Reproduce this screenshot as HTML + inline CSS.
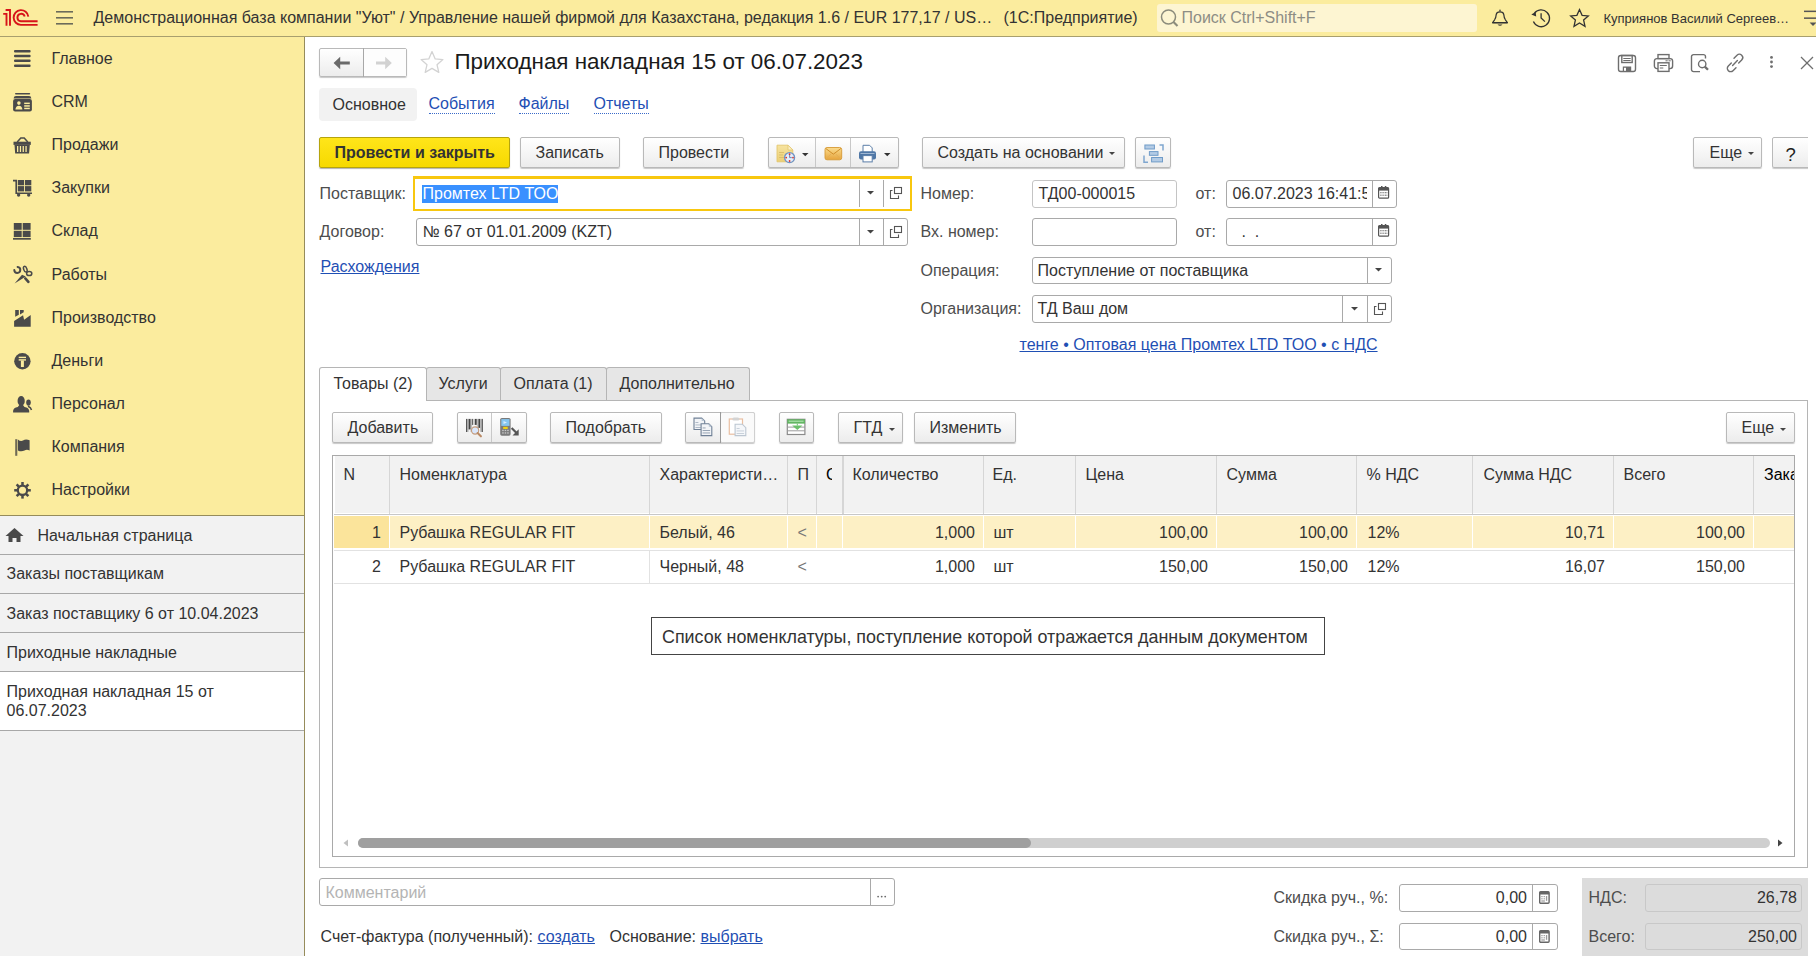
<!DOCTYPE html>
<html><head><meta charset="utf-8"><style>
html,body{margin:0;padding:0;width:1816px;height:956px;overflow:hidden;background:#fff}
body{position:relative;font-family:"Liberation Sans", sans-serif;font-size:16px}
.t{position:absolute;white-space:pre;line-height:20px;font-family:"Liberation Sans", sans-serif}
svg{overflow:visible}
</style></head><body>
<div style="position:absolute;left:0px;top:0px;width:1816px;height:36px;box-sizing:border-box;background:#fbec9e"></div>
<div style="position:absolute;left:0px;top:36px;width:1816px;height:1px;box-sizing:border-box;background:#a89f6e"></div>
<svg style="position:absolute;left:0px;top:0px" width="44" height="32" viewBox="0 0 44 32"><g fill="none" stroke="#d7141a" stroke-width="1.9" stroke-linecap="butt">
<path d="M3.2 13.9 H6.5 V25.7"/>
<path d="M5.6 10 H10 V25.7"/>
<path d="M28.3 16.6 A7.35 7.35 0 1 0 20.9 24.85 H37.6"/>
<path d="M24.7 16.6 A3.7 3.7 0 1 0 20.9 21.2 H37.6"/>
</g></svg>
<svg style="position:absolute;left:56px;top:11px" width="18" height="14" viewBox="0 0 18 14"><g fill="#6b6b5a"><rect x="0" y="0" width="17" height="1.6"/><rect x="0" y="6" width="17" height="1.6"/><rect x="0" y="12" width="17" height="1.6"/></g></svg>
<div class="t" style="left:93.5px;top:8px;font-size:16px;color:#333;font-weight:400;">Демонстрационная база компании "Уют" / Управление нашей фирмой для Казахстана, редакция 1.6 / EUR 177,17 / US…</div>
<div class="t" style="left:1003.5px;top:8px;font-size:16px;color:#333;font-weight:400;">(1С:Предприятие)</div>
<div style="position:absolute;left:1157px;top:4px;width:320px;height:28px;box-sizing:border-box;background:#fdf5d2;border-radius:3px"></div>
<svg style="position:absolute;left:1160px;top:8px" width="20" height="20" viewBox="0 0 20 20"><g fill="none" stroke="#8c8c7c" stroke-width="1.5"><circle cx="8.5" cy="9" r="7"/><path d="M13.5 14 L17.5 18" stroke-width="2.2"/></g></svg>
<div class="t" style="left:1181.5px;top:8px;font-size:16px;color:#8d8d85;font-weight:400;">Поиск Ctrl+Shift+F</div>
<svg style="position:absolute;left:1491px;top:8px" width="20" height="20" viewBox="0 0 20 20"><g fill="none" stroke="#333" stroke-width="1.2" stroke-linejoin="round"><path d="M1.6 14.6 L3.6 11.8 Q5 9.6 5.2 6.6 Q5.6 3.9 9 3.9 Q12.4 3.9 12.8 6.6 Q13 9.6 14.4 11.8 L16.4 14.6 Z"/></g><path d="M9 1 L10 3.2 H8Z" fill="#333"/><rect x="1.3" y="14.2" width="15.4" height="1.2" fill="#333"/><path d="M6.5 16.4 H11.5 Q9 19.2 6.5 16.4Z" fill="#333"/></svg>
<svg style="position:absolute;left:1530px;top:8px" width="22" height="20" viewBox="0 0 22 20"><g fill="none" stroke="#333" stroke-width="1.3"><path d="M3.4 13.6 A8.4 8.4 0 1 0 4.2 5.6"/><path d="M11.1 5.2 V10 L14.9 13.6"/></g><path d="M1.3 6.6 L5.6 4 L6.2 8.5Z" fill="#333"/></svg>
<svg style="position:absolute;left:1569px;top:8px" width="21" height="20" viewBox="0 0 21 20"><path d="M10.5 1.6 L13.1 7.3 L19.3 7.9 L14.6 12 L16 18.3 L10.5 15 L5 18.3 L6.4 12 L1.7 7.9 L7.9 7.3Z" fill="none" stroke="#333" stroke-width="1.3" stroke-linejoin="miter"/></svg>
<div class="t" style="left:1603.5px;top:9px;font-size:13.33px;color:#333;font-weight:400;font-size:13px">Куприянов Василий Сергеев…</div>
<svg style="position:absolute;left:1801px;top:8px" width="15" height="20" viewBox="0 0 15 20"><g fill="#555"><rect x="3" y="2.6" width="14" height="1.5"/><rect x="3" y="9.4" width="14" height="1.5"/><path d="M8.6 14.6 H15.4 L12 18Z"/></g></svg>
<div style="position:absolute;left:0px;top:37px;width:304px;height:478px;box-sizing:border-box;background:#fbec9e"></div>
<div style="position:absolute;left:0px;top:515px;width:304px;height:441px;box-sizing:border-box;background:#f2f2f2"></div>
<div style="position:absolute;left:304px;top:37px;width:1px;height:919px;box-sizing:border-box;background:#968c5b"></div>
<div style="position:absolute;left:0px;top:515px;width:304px;height:1px;box-sizing:border-box;background:#968c5b"></div>
<div class="t" style="left:51.5px;top:49px;font-size:16px;color:#333;font-weight:400;">Главное</div>
<div class="t" style="left:51.5px;top:92px;font-size:16px;color:#333;font-weight:400;">CRM</div>
<div class="t" style="left:51.5px;top:135px;font-size:16px;color:#333;font-weight:400;">Продажи</div>
<div class="t" style="left:51.5px;top:178px;font-size:16px;color:#333;font-weight:400;">Закупки</div>
<div class="t" style="left:51.5px;top:221px;font-size:16px;color:#333;font-weight:400;">Склад</div>
<div class="t" style="left:51.5px;top:265px;font-size:16px;color:#333;font-weight:400;">Работы</div>
<div class="t" style="left:51.5px;top:308px;font-size:16px;color:#333;font-weight:400;">Производство</div>
<div class="t" style="left:51.5px;top:351px;font-size:16px;color:#333;font-weight:400;">Деньги</div>
<div class="t" style="left:51.5px;top:394px;font-size:16px;color:#333;font-weight:400;">Персонал</div>
<div class="t" style="left:51.5px;top:437px;font-size:16px;color:#333;font-weight:400;">Компания</div>
<div class="t" style="left:51.5px;top:480px;font-size:16px;color:#333;font-weight:400;">Настройки</div>
<svg style="position:absolute;left:12px;top:48px" width="22" height="20" viewBox="0 0 22 20"><g fill="#4a4a4a"><rect x="2" y="2" width="16.6" height="2.4" rx="1"/><rect x="2" y="6.8" width="16.6" height="2.4" rx="1"/><rect x="2" y="11.5" width="16.6" height="2.4" rx="1"/><rect x="2" y="16.5" width="16.6" height="2.4" rx="1"/></g></svg>
<svg style="position:absolute;left:12px;top:91px" width="22" height="20" viewBox="0 0 22 20"><g transform="translate(1,0)"><g fill="#4a4a4a"><rect x="2" y="2" width="15.2" height="1.6" rx="0.8"/><path d="M0.6 7.4 Q0.8 5 3 5 H16 Q18.2 5 18.4 7.4Z"/><rect x="0.1" y="8" width="18.8" height="12.6" rx="2"/></g><g fill="#fbec9e"><circle cx="5.9" cy="12.1" r="1.8"/><path d="M2.4 18.6 Q2.7 14.8 5.9 14.8 Q9.1 14.8 9.4 18.6Z"/><rect x="11.2" y="11.6" width="5.6" height="1.5"/><rect x="11.2" y="14.2" width="5.6" height="1.5"/><rect x="11.2" y="16.7" width="5.6" height="1.5"/></g></g></svg>
<svg style="position:absolute;left:12px;top:134px" width="22" height="20" viewBox="0 0 22 20"><path d="M5.2 8 L8.8 4 H12.2 L15.8 8" fill="none" stroke="#4a4a4a" stroke-width="1.5"/><g fill="#4a4a4a"><rect x="1.5" y="7.7" width="17.3" height="3.2"/><path d="M2.5 10.9 H17.8 L17.1 19.4 H3.2Z"/></g><g fill="#fbec9e"><rect x="5" y="12" width="1.3" height="6"/><rect x="7.8" y="12" width="1.3" height="6"/><rect x="10.6" y="12" width="1.3" height="6"/><rect x="13.4" y="12" width="1.3" height="6"/></g></svg>
<svg style="position:absolute;left:12px;top:177px" width="22" height="20" viewBox="0 0 22 20"><path d="M1 3.6 H4.2 V16.3 H20" fill="none" stroke="#4a4a4a" stroke-width="1.6"/><g fill="#4a4a4a"><rect x="5.8" y="3" width="6.3" height="5.3"/><rect x="13" y="3" width="6.3" height="5.3"/><rect x="5.8" y="9.1" width="6.3" height="5.3"/><rect x="13" y="9.1" width="6.3" height="5.3"/><circle cx="6.6" cy="18.1" r="1.7"/><circle cx="16.7" cy="18.1" r="1.7"/></g></svg>
<svg style="position:absolute;left:12px;top:220px" width="22" height="20" viewBox="0 0 22 20"><g fill="#4a4a4a"><rect x="1.8" y="3" width="7.9" height="6.8"/><rect x="10.7" y="3" width="7.9" height="6.8"/><rect x="1.8" y="10.8" width="7.9" height="6.3"/><rect x="10.7" y="10.8" width="7.9" height="6.3"/><rect x="1" y="18" width="17.8" height="1.7"/></g></svg>
<svg style="position:absolute;left:12px;top:264px" width="22" height="20" viewBox="0 0 22 20"><g fill="none" stroke="#4a4a4a" stroke-linecap="round"><path d="M5.6 2.9 A3 3 0 1 1 2.3 6.1" stroke-width="2"/><path d="M13.3 14.4 L16.4 17.8" stroke-width="2.6"/><ellipse cx="13.3" cy="5.2" rx="1.6" ry="3" transform="rotate(-20 13.3 5.2)" stroke-width="1.5"/><ellipse cx="17.2" cy="9.5" rx="2.6" ry="2.1" stroke-width="1.5"/></g><path d="M10 10.8 L13.8 12.6 L2.6 19.6Z" fill="#4a4a4a"/></svg>
<svg style="position:absolute;left:12px;top:307px" width="22" height="20" viewBox="0 0 22 20"><g fill="#4a4a4a"><path d="M2.1 19.8 V14 L11.05 8.3 L12.1 12.7 L18.7 8.1 V19.8Z"/><path d="M3.2 3 H6.8 V7.8 L3.2 9.8Z"/><path d="M8 3 H11.7 V5.3 L8 7.5Z"/></g></svg>
<svg style="position:absolute;left:12px;top:350px" width="22" height="20" viewBox="0 0 22 20"><circle cx="10.4" cy="11.3" r="8.2" fill="#4a4a4a"/><g fill="#fbec9e"><rect x="6.7" y="6.7" width="7.3" height="1.4"/><rect x="6.7" y="9.2" width="7.3" height="1.4"/><rect x="8.9" y="10.5" width="3" height="6.5"/></g></svg>
<svg style="position:absolute;left:12px;top:393px" width="22" height="20" viewBox="0 0 22 20"><g fill="#4a4a4a"><ellipse cx="9.15" cy="7.9" rx="3.6" ry="4.9"/><path d="M1.1 19.6 V17.8 Q1.4 14.8 5.8 14 L7.3 12 H11 L12.5 14 Q16.9 14.8 17.2 17.8 V19.6Z"/><ellipse cx="16.5" cy="9.6" rx="2.3" ry="3.1"/></g><path d="M16 13.3 Q19 14.5 19.5 17" fill="none" stroke="#4a4a4a" stroke-width="1.5"/></svg>
<svg style="position:absolute;left:12px;top:436px" width="22" height="20" viewBox="0 0 22 20"><rect x="3.2" y="3.2" width="2.1" height="16.6" fill="#6f6a55"/><path d="M5.9 3.5 Q8.5 5.8 11 4.6 Q13.5 2.6 17.6 4.2 V14.4 Q14.5 13.2 12.5 14.6 Q9 16.1 5.9 14.4Z" fill="#4a4a4a"/></svg>
<svg style="position:absolute;left:12px;top:479px" width="22" height="20" viewBox="0 0 22 20"><g fill="#4a4a4a"><rect x="9.25" y="3" width="2.5" height="4" transform="rotate(0 10.5 11.3)"/><rect x="9.25" y="3" width="2.5" height="4" transform="rotate(45 10.5 11.3)"/><rect x="9.25" y="3" width="2.5" height="4" transform="rotate(90 10.5 11.3)"/><rect x="9.25" y="3" width="2.5" height="4" transform="rotate(135 10.5 11.3)"/><rect x="9.25" y="3" width="2.5" height="4" transform="rotate(180 10.5 11.3)"/><rect x="9.25" y="3" width="2.5" height="4" transform="rotate(225 10.5 11.3)"/><rect x="9.25" y="3" width="2.5" height="4" transform="rotate(270 10.5 11.3)"/><rect x="9.25" y="3" width="2.5" height="4" transform="rotate(315 10.5 11.3)"/></g><circle cx="10.5" cy="11.3" r="4.7" fill="none" stroke="#4a4a4a" stroke-width="2.3"/></svg>
<div style="position:absolute;left:0px;top:554px;width:304px;height:1px;box-sizing:border-box;background:#a8a8a8"></div>
<div style="position:absolute;left:0px;top:593px;width:304px;height:1px;box-sizing:border-box;background:#a8a8a8"></div>
<div style="position:absolute;left:0px;top:632px;width:304px;height:1px;box-sizing:border-box;background:#a8a8a8"></div>
<div style="position:absolute;left:0px;top:671px;width:304px;height:1px;box-sizing:border-box;background:#a8a8a8"></div>
<div style="position:absolute;left:0px;top:672px;width:304px;height:58px;box-sizing:border-box;background:#fff"></div>
<div style="position:absolute;left:0px;top:730px;width:304px;height:1px;box-sizing:border-box;background:#a8a8a8"></div>
<svg style="position:absolute;left:5px;top:527px" width="20" height="16" viewBox="0 0 20 16"><path d="M9.5 1 L18.5 9 H15.5 V15 H11.5 V11 H7.5 V15 H3.5 V9 H0.5Z" fill="#4a4a4a"/></svg>
<div class="t" style="left:37.5px;top:526px;font-size:16px;color:#333;font-weight:400;">Начальная страница</div>
<div class="t" style="left:6.5px;top:564px;font-size:16px;color:#333;font-weight:400;">Заказы поставщикам</div>
<div class="t" style="left:6.5px;top:604px;font-size:16px;color:#333;font-weight:400;">Заказ поставщику 6 от 10.04.2023</div>
<div class="t" style="left:6.5px;top:643px;font-size:16px;color:#333;font-weight:400;">Приходные накладные</div>
<div class="t" style="left:6.5px;top:682px;font-size:16px;color:#333;font-weight:400;">Приходная накладная 15 от</div>
<div class="t" style="left:6.5px;top:701px;font-size:16px;color:#333;font-weight:400;">06.07.2023</div>
<div style="position:absolute;left:319px;top:48px;width:88px;height:29px;box-sizing:border-box;border:1px solid #b9b9b9;border-radius:2px;background:linear-gradient(#ffffff,#f4f4f4 60%,#ececec);box-shadow:0 1px 1px rgba(0,0,0,.22);"></div>
<div style="position:absolute;left:364px;top:49px;width:42px;height:27px;box-sizing:border-box;background:#fdfdfd"></div>
<div style="position:absolute;left:363px;top:48px;width:1px;height:29px;box-sizing:border-box;background:#a8a8a8"></div>
<svg style="position:absolute;left:332px;top:55px" width="22" height="16" viewBox="0 0 22 16"><path d="M1.6 8 L8.2 1.8 V6.5 H17.8 V9.5 H8.2 V14.2Z" fill="#6a6a6a"/></svg>
<svg style="position:absolute;left:374px;top:55px" width="22" height="16" viewBox="0 0 22 16"><path d="M17.8 8 L11.2 1.8 V6.5 H2 V9.5 H11.2 V14.2Z" fill="#d2d2d2"/></svg>
<svg style="position:absolute;left:419px;top:50px" width="26" height="26" viewBox="0 0 26 26"><path d="M13 1.6 L16.2 8.9 L23.9 9.6 L18 14.7 L19.8 22.4 L13 18.4 L6.2 22.4 L8 14.7 L2.1 9.6 L9.8 8.9Z" fill="none" stroke="#d3d3d3" stroke-width="1.3" stroke-linejoin="round"/></svg>
<div class="t" style="left:454.5px;top:52px;font-size:22.4px;color:#1a1a1a;font-weight:400;">Приходная накладная 15 от 06.07.2023</div>
<svg style="position:absolute;left:1617px;top:54px" width="20" height="19" viewBox="0 0 20 19"><g fill="none" stroke="#6e6e6e" stroke-width="1.4"><rect x="1.5" y="1.5" width="17" height="16" rx="2.2"/><rect x="4.8" y="1.5" width="10.4" height="7"/></g><g fill="#6e6e6e"><rect x="6.3" y="4" width="7.4" height="1"/><rect x="6.3" y="6" width="7.4" height="1"/><rect x="5.8" y="12.5" width="8.4" height="5"/></g><rect x="7" y="13.8" width="2" height="3" fill="#fff"/></svg>
<svg style="position:absolute;left:1653px;top:53px" width="21" height="20" viewBox="0 0 21 20"><g fill="none" stroke="#6e6e6e" stroke-width="1.4"><rect x="5" y="1.6" width="11" height="4"/><rect x="1.4" y="5.6" width="18.2" height="10" rx="2.5"/><rect x="5" y="9.8" width="11" height="8.6" fill="#fff"/></g><g fill="#6e6e6e"><rect x="6.8" y="12" width="7" height="1"/><rect x="6.8" y="14.5" width="3.5" height="1"/><rect x="12.5" y="7.3" width="2.2" height="1"/><rect x="15.5" y="7.3" width="2.2" height="1"/></g></svg>
<svg style="position:absolute;left:1690px;top:53px" width="20" height="20" viewBox="0 0 20 20"><g fill="none" stroke="#6e6e6e" stroke-width="1.4"><path d="M10 18.6 H3.5 A2 2 0 0 1 1.5 16.6 V3.6 A2 2 0 0 1 3.5 1.6 H13.5 A2 2 0 0 1 15.5 3.6 V5.5"/><circle cx="12.2" cy="11" r="3.7"/></g><path d="M14.8 13.6 L18 16.8" stroke="#6e6e6e" stroke-width="2.3"/></svg>
<svg style="position:absolute;left:1725px;top:53px" width="20" height="20" viewBox="0 0 20 20"><g fill="none" stroke="#6e6e6e" stroke-width="1.4" stroke-linecap="round"><path d="M7.6 12.4 L12.4 7.6"/><path d="M6.3 10 L3.3 13 A3.3 3.3 0 0 0 8 17.7 L11 14.7"/><path d="M13.7 10 L16.7 7 A3.3 3.3 0 0 0 12 2.3 L9 5.3"/></g></svg>
<svg style="position:absolute;left:1766px;top:55px" width="10" height="14" viewBox="0 0 10 14"><g fill="#6e6e6e"><circle cx="5.5" cy="2.4" r="1.4"/><circle cx="5.5" cy="7" r="1.4"/><circle cx="5.5" cy="11.6" r="1.4"/></g></svg>
<svg style="position:absolute;left:1798px;top:54px" width="18" height="18" viewBox="0 0 18 18"><g stroke="#6e6e6e" stroke-width="1.2"><path d="M3 3 L15 15"/><path d="M15 3 L3 15"/></g></svg>
<div style="position:absolute;left:319px;top:88px;width:98px;height:33px;box-sizing:border-box;background:#f2f2f2;border-radius:4px"></div>
<div class="t" style="left:332.5px;top:95px;font-size:16px;color:#333;font-weight:400;">Основное</div>
<div class="t" style="left:428.5px;top:95px;font-size:16px;color:#1f4fb4;font-weight:400;border-bottom:1px dotted #3a6bc9;line-height:18px;">События</div>
<div class="t" style="left:518.5px;top:95px;font-size:16px;color:#1f4fb4;font-weight:400;border-bottom:1px dotted #3a6bc9;line-height:18px;">Файлы</div>
<div class="t" style="left:593.5px;top:95px;font-size:16px;color:#1f4fb4;font-weight:400;border-bottom:1px dotted #3a6bc9;line-height:18px;">Отчеты</div>
<div style="position:absolute;left:319px;top:137px;width:191px;height:31px;box-sizing:border-box;border:1px solid #b5a40e;border-radius:2px;background:linear-gradient(#ffe51a,#f6d900);box-shadow:0 1px 1px rgba(0,0,0,.3)"></div>
<div class="t" style="left:334.5px;top:143px;font-size:16px;color:#333;font-weight:700;">Провести и закрыть</div>
<div style="position:absolute;left:520px;top:137px;width:100px;height:31px;box-sizing:border-box;border:1px solid #b9b9b9;border-radius:2px;background:linear-gradient(#ffffff,#f4f4f4 60%,#ececec);box-shadow:0 1px 1px rgba(0,0,0,.22);"></div>
<div class="t" style="left:535.5px;top:143px;font-size:16px;color:#333;font-weight:400;">Записать</div>
<div style="position:absolute;left:643px;top:137px;width:101px;height:31px;box-sizing:border-box;border:1px solid #b9b9b9;border-radius:2px;background:linear-gradient(#ffffff,#f4f4f4 60%,#ececec);box-shadow:0 1px 1px rgba(0,0,0,.22);"></div>
<div class="t" style="left:658.5px;top:143px;font-size:16px;color:#333;font-weight:400;">Провести</div>
<div style="position:absolute;left:768px;top:137px;width:131px;height:31px;box-sizing:border-box;border:1px solid #b9b9b9;border-radius:2px;background:linear-gradient(#ffffff,#f4f4f4 60%,#ececec);box-shadow:0 1px 1px rgba(0,0,0,.22);"></div>
<div style="position:absolute;left:815px;top:138px;width:1px;height:29px;box-sizing:border-box;background:#c8c8c8"></div>
<div style="position:absolute;left:850px;top:138px;width:1px;height:29px;box-sizing:border-box;background:#c8c8c8"></div>
<svg style="position:absolute;left:775px;top:143px" width="24" height="22" viewBox="0 0 24 22"><defs><linearGradient id="gd" x1="0" y1="0" x2="0" y2="1"><stop offset="0" stop-color="#f6e3a0"/><stop offset="1" stop-color="#eccf74"/></linearGradient><linearGradient id="ge" x1="0" y1="0" x2="0" y2="1"><stop offset="0" stop-color="#fbdc8e"/><stop offset="1" stop-color="#e6a43c"/></linearGradient></defs><path d="M2 2.2 H13 L17.8 7 V18.8 H2Z" fill="url(#gd)" stroke="#e3c66e" stroke-width="0.9"/><path d="M13 2.2 V7 H17.8Z" fill="#fbf0c8" stroke="#e3c66e" stroke-width="0.8"/><g fill="#d8bd6a"><rect x="4" y="9" width="5" height="0.9"/><rect x="4" y="11.5" width="4" height="0.9"/><rect x="4" y="14" width="5" height="0.9"/></g><circle cx="14.6" cy="14.6" r="5" fill="#e4eefa" stroke="#6f93c4" stroke-width="1.3"/><g fill="#e0342b"><circle cx="14.6" cy="11.2" r="0.9"/><circle cx="18" cy="14.6" r="0.9"/><circle cx="14.6" cy="18" r="0.9"/><circle cx="11.2" cy="14.6" r="0.9"/></g><path d="M14.6 12 V14.6 H16.8" fill="none" stroke="#5a7fb8" stroke-width="0.9"/></svg>
<svg style="position:absolute;left:801px;top:152px" width="8" height="5" viewBox="0 0 8 5"><path d="M1 1 H7.5 L4.25 4.2Z" fill="#333"/></svg>
<svg style="position:absolute;left:824px;top:146px" width="19" height="15" viewBox="0 0 19 15"><rect x="1" y="1.5" width="16.7" height="12.3" rx="2" fill="url(#ge)" stroke="#d69a36" stroke-width="0.9"/><path d="M1.8 2.5 L9.35 8.2 L16.9 2.5" fill="none" stroke="#d08e2a" stroke-width="1"/><path d="M1.8 13 L7 8 M16.9 13 L11.7 8" stroke="#e0ac55" stroke-width="0.8"/></svg>
<svg style="position:absolute;left:857px;top:144px" width="22" height="20" viewBox="0 0 22 20"><path d="M6 8 V1.3 H12.6 L15.2 3.9 V8" fill="#fff" stroke="#5b7ea8" stroke-width="1"/><rect x="2" y="7.3" width="17" height="8.2" rx="2" fill="#4f77a6"/><rect x="3.5" y="9" width="14" height="1" fill="#9fb7d3"/><rect x="6" y="11.6" width="9.2" height="6.3" fill="#fff" stroke="#5b7ea8" stroke-width="1"/></svg>
<svg style="position:absolute;left:883px;top:152px" width="8" height="5" viewBox="0 0 8 5"><path d="M1 1 H7.5 L4.25 4.2Z" fill="#333"/></svg>
<div style="position:absolute;left:922px;top:137px;width:203px;height:31px;box-sizing:border-box;border:1px solid #b9b9b9;border-radius:2px;background:linear-gradient(#ffffff,#f4f4f4 60%,#ececec);box-shadow:0 1px 1px rgba(0,0,0,.22);"></div>
<div class="t" style="left:937.5px;top:143px;font-size:16px;color:#333;font-weight:400;">Создать на основании</div>
<svg style="position:absolute;left:1108px;top:151px" width="8" height="5" viewBox="0 0 8 5"><path d="M1 1 H7 L4 4Z" fill="#444"/></svg>
<div style="position:absolute;left:1135px;top:137px;width:36px;height:31px;box-sizing:border-box;border:1px solid #b9b9b9;border-radius:2px;background:linear-gradient(#ffffff,#f4f4f4 60%,#ececec);box-shadow:0 1px 1px rgba(0,0,0,.22);"></div>
<svg style="position:absolute;left:1141px;top:142px" width="24" height="22" viewBox="0 0 24 22"><g fill="none" stroke="#7fa6cf" stroke-width="1.5"><path d="M18.5 3 H22 V8.5"/><path d="M3 13.5 V20.3 H7"/></g><g fill="#b3cbe5" stroke="#6f9bc8" stroke-width="1"><rect x="3.9" y="3" width="9.5" height="4"/><rect x="8.4" y="9.6" width="8.6" height="3.7"/><rect x="10.6" y="15.5" width="10.9" height="4.4"/></g></svg>
<div style="position:absolute;left:1693px;top:137px;width:69px;height:31px;box-sizing:border-box;border:1px solid #b9b9b9;border-radius:2px;background:linear-gradient(#ffffff,#f4f4f4 60%,#ececec);box-shadow:0 1px 1px rgba(0,0,0,.22);"></div>
<div class="t" style="left:1709.5px;top:143px;font-size:16px;color:#333;font-weight:400;">Еще</div>
<svg style="position:absolute;left:1747px;top:151px" width="8" height="5" viewBox="0 0 8 5"><path d="M1 1 H7 L4 4Z" fill="#444"/></svg>
<div style="position:absolute;left:1772px;top:136px;width:36px;height:34px;overflow:hidden">
<div style="position:absolute;left:0px;top:1px;width:44px;height:31px;box-sizing:border-box;border:1px solid #b9b9b9;border-radius:2px;background:linear-gradient(#ffffff,#f4f4f4 60%,#ececec);box-shadow:0 1px 1px rgba(0,0,0,.22)"></div>
</div>
<div class="t" style="left:1785.5px;top:145px;font-size:18.5px;color:#222;font-weight:400;">?</div>
<div class="t" style="left:319.5px;top:184px;font-size:16px;color:#4d4d4d;font-weight:400;">Поставщик:</div>
<div style="position:absolute;left:413px;top:176px;width:499px;height:35px;box-sizing:border-box;border:2px solid #f8c70f;border-top-width:3px;background:#fff"></div>
<div style="position:absolute;left:859px;top:180px;width:1px;height:27px;box-sizing:border-box;background:#a9a9a9"></div>
<div style="position:absolute;left:883px;top:180px;width:1px;height:27px;box-sizing:border-box;background:#a9a9a9"></div>
<div style="position:absolute;left:422px;top:185px;width:136px;height:18px;box-sizing:border-box;background:#3990ff"></div>
<div class="t" style="left:422.5px;top:184px;font-size:16px;color:#fff;font-weight:400;">Промтех LTD ТОО</div>
<svg style="position:absolute;left:866px;top:190px" width="10" height="6" viewBox="0 0 10 6"><path d="M1 1 H8 L4.5 4.5Z" fill="#444"/></svg>
<svg style="position:absolute;left:889px;top:186px" width="14" height="14" viewBox="0 0 14 14"><g fill="none" stroke="#555" stroke-width="1.1"><rect x="5.5" y="1.5" width="7" height="6"/><path d="M3.5 4.5 H1.5 V12.5 H9.5 V9.5"/></g></svg>
<div class="t" style="left:319.5px;top:222px;font-size:16px;color:#4d4d4d;font-weight:400;">Договор:</div>
<div style="position:absolute;left:416px;top:218px;width:492px;height:28px;box-sizing:border-box;border:1px solid #a9a9a9;border-radius:3px;background:#fff;"></div>
<div style="position:absolute;left:859px;top:219px;width:1px;height:26px;box-sizing:border-box;background:#a9a9a9"></div>
<div style="position:absolute;left:883px;top:219px;width:1px;height:26px;box-sizing:border-box;background:#a9a9a9"></div>
<div class="t" style="left:422.5px;top:222px;font-size:16px;color:#333;font-weight:400;">№ 67 от 01.01.2009 (KZT)</div>
<svg style="position:absolute;left:866px;top:229px" width="10" height="6" viewBox="0 0 10 6"><path d="M1 1 H8 L4.5 4.5Z" fill="#444"/></svg>
<svg style="position:absolute;left:889px;top:225px" width="14" height="14" viewBox="0 0 14 14"><g fill="none" stroke="#555" stroke-width="1.1"><rect x="5.5" y="1.5" width="7" height="6"/><path d="M3.5 4.5 H1.5 V12.5 H9.5 V9.5"/></g></svg>
<div class="t" style="left:320.5px;top:257px;font-size:16px;color:#1f4fb4;font-weight:400;text-decoration:underline;">Расхождения</div>
<div class="t" style="left:920.5px;top:184px;font-size:16px;color:#4d4d4d;font-weight:400;">Номер:</div>
<div style="position:absolute;left:1032px;top:180px;width:145px;height:28px;box-sizing:border-box;border:1px solid #a9a9a9;border-radius:3px;background:#fff;border-color:#c4c4c4"></div>
<div class="t" style="left:1038.5px;top:184px;font-size:16px;color:#333;font-weight:400;">ТД00-000015</div>
<div class="t" style="left:1195.5px;top:184px;font-size:16px;color:#4d4d4d;font-weight:400;">от:</div>
<div style="position:absolute;left:1226px;top:180px;width:171px;height:28px;box-sizing:border-box;border:1px solid #a9a9a9;border-radius:3px;background:#fff;"></div>
<div style="position:absolute;left:1372px;top:181px;width:1px;height:26px;box-sizing:border-box;background:#a9a9a9"></div>
<div style="position:absolute;left:1231px;top:184px;width:136px;height:20px;overflow:hidden"><div class="t" style="left:1.5px;top:0;color:#333">06.07.2023 16:41:52</div></div>
<svg style="position:absolute;left:1378px;top:186px" width="13" height="14" viewBox="0 0 13 14"><rect x="0.6" y="1.6" width="10" height="10.6" rx="1" fill="#fff" stroke="#555" stroke-width="1.2"/><rect x="0.6" y="1.6" width="10" height="3" fill="#555"/><rect x="3" y="0" width="1.5" height="2.5" fill="#555"/><rect x="6.8" y="0" width="1.5" height="2.5" fill="#555"/><g fill="#8a8a8a"><rect x="2.2" y="6" width="1.4" height="1.3"/><rect x="4.4" y="6" width="1.4" height="1.3"/><rect x="6.6" y="6" width="1.4" height="1.3"/><rect x="8.4" y="6" width="1" height="1.3"/><rect x="2.2" y="8.6" width="1.4" height="1.3"/><rect x="4.4" y="8.6" width="1.4" height="1.3"/><rect x="6.6" y="8.6" width="1.4" height="1.3"/><rect x="8.4" y="8.6" width="1" height="1.3"/></g></svg>
<div class="t" style="left:920.5px;top:222px;font-size:16px;color:#4d4d4d;font-weight:400;">Вх. номер:</div>
<div style="position:absolute;left:1032px;top:218px;width:145px;height:28px;box-sizing:border-box;border:1px solid #a9a9a9;border-radius:3px;background:#fff;"></div>
<div class="t" style="left:1195.5px;top:222px;font-size:16px;color:#4d4d4d;font-weight:400;">от:</div>
<div style="position:absolute;left:1226px;top:218px;width:171px;height:28px;box-sizing:border-box;border:1px solid #a9a9a9;border-radius:3px;background:#fff;"></div>
<div style="position:absolute;left:1372px;top:219px;width:1px;height:26px;box-sizing:border-box;background:#a9a9a9"></div>
<div class="t" style="left:1241.5px;top:222px;font-size:16px;color:#333;font-weight:400;">.&nbsp;&nbsp;.</div>
<svg style="position:absolute;left:1378px;top:224px" width="13" height="14" viewBox="0 0 13 14"><rect x="0.6" y="1.6" width="10" height="10.6" rx="1" fill="#fff" stroke="#555" stroke-width="1.2"/><rect x="0.6" y="1.6" width="10" height="3" fill="#555"/><rect x="3" y="0" width="1.5" height="2.5" fill="#555"/><rect x="6.8" y="0" width="1.5" height="2.5" fill="#555"/><g fill="#8a8a8a"><rect x="2.2" y="6" width="1.4" height="1.3"/><rect x="4.4" y="6" width="1.4" height="1.3"/><rect x="6.6" y="6" width="1.4" height="1.3"/><rect x="8.4" y="6" width="1" height="1.3"/><rect x="2.2" y="8.6" width="1.4" height="1.3"/><rect x="4.4" y="8.6" width="1.4" height="1.3"/><rect x="6.6" y="8.6" width="1.4" height="1.3"/><rect x="8.4" y="8.6" width="1" height="1.3"/></g></svg>
<div class="t" style="left:920.5px;top:261px;font-size:16px;color:#4d4d4d;font-weight:400;">Операция:</div>
<div style="position:absolute;left:1032px;top:257px;width:360px;height:27px;box-sizing:border-box;border:1px solid #a9a9a9;border-radius:3px;background:#fff;"></div>
<div style="position:absolute;left:1367px;top:258px;width:1px;height:25px;box-sizing:border-box;background:#a9a9a9"></div>
<div class="t" style="left:1037.5px;top:261px;font-size:16px;color:#333;font-weight:400;">Поступление от поставщика</div>
<svg style="position:absolute;left:1374px;top:267px" width="10" height="6" viewBox="0 0 10 6"><path d="M1 1 H8 L4.5 4.5Z" fill="#444"/></svg>
<div class="t" style="left:920.5px;top:299px;font-size:16px;color:#4d4d4d;font-weight:400;">Организация:</div>
<div style="position:absolute;left:1032px;top:295px;width:360px;height:28px;box-sizing:border-box;border:1px solid #a9a9a9;border-radius:3px;background:#fff;"></div>
<div style="position:absolute;left:1342px;top:296px;width:1px;height:26px;box-sizing:border-box;background:#a9a9a9"></div>
<div style="position:absolute;left:1367px;top:296px;width:1px;height:26px;box-sizing:border-box;background:#a9a9a9"></div>
<div class="t" style="left:1037.5px;top:299px;font-size:16px;color:#333;font-weight:400;">ТД Ваш дом</div>
<svg style="position:absolute;left:1350px;top:306px" width="10" height="6" viewBox="0 0 10 6"><path d="M1 1 H8 L4.5 4.5Z" fill="#444"/></svg>
<svg style="position:absolute;left:1373px;top:302px" width="14" height="14" viewBox="0 0 14 14"><g fill="none" stroke="#555" stroke-width="1.1"><rect x="5.5" y="1.5" width="7" height="6"/><path d="M3.5 4.5 H1.5 V12.5 H9.5 V9.5"/></g></svg>
<div class="t" style="left:1019.5px;top:335px;font-size:16px;color:#1f4fb4;font-weight:400;text-decoration:underline;">тенге • Оптовая цена Промтех LTD ТОО • с НДС</div>
<div style="position:absolute;left:319px;top:400px;width:1489px;height:468px;box-sizing:border-box;border:1px solid #b5b5b5;background:#fff"></div>
<div style="position:absolute;left:426px;top:367px;width:75px;height:33px;box-sizing:border-box;border:1px solid #b5b5b5;border-bottom:none;border-radius:3px 3px 0 0;background:#e6e6e6"></div>
<div class="t" style="left:438.5px;top:374px;font-size:16px;color:#333;font-weight:400;">Услуги</div>
<div style="position:absolute;left:500px;top:367px;width:107px;height:33px;box-sizing:border-box;border:1px solid #b5b5b5;border-bottom:none;border-radius:3px 3px 0 0;background:#e6e6e6"></div>
<div class="t" style="left:513.5px;top:374px;font-size:16px;color:#333;font-weight:400;">Оплата (1)</div>
<div style="position:absolute;left:606px;top:367px;width:144px;height:33px;box-sizing:border-box;border:1px solid #b5b5b5;border-bottom:none;border-radius:3px 3px 0 0;background:#e6e6e6"></div>
<div class="t" style="left:619.5px;top:374px;font-size:16px;color:#333;font-weight:400;">Дополнительно</div>
<div style="position:absolute;left:319px;top:367px;width:108px;height:34px;box-sizing:border-box;border:1px solid #b5b5b5;border-bottom:none;border-radius:3px 3px 0 0;background:#fff"></div>
<div class="t" style="left:333.5px;top:374px;font-size:16px;color:#333;font-weight:400;">Товары (2)</div>
<div style="position:absolute;left:332px;top:412px;width:101px;height:31px;box-sizing:border-box;border:1px solid #b9b9b9;border-radius:2px;background:linear-gradient(#ffffff,#f4f4f4 60%,#ececec);box-shadow:0 1px 1px rgba(0,0,0,.22);"></div>
<div class="t" style="left:347.5px;top:418px;font-size:16px;color:#333;font-weight:400;">Добавить</div>
<div style="position:absolute;left:457px;top:412px;width:70px;height:31px;box-sizing:border-box;border:1px solid #b9b9b9;border-radius:2px;background:linear-gradient(#ffffff,#f4f4f4 60%,#ececec);box-shadow:0 1px 1px rgba(0,0,0,.22);"></div>
<div style="position:absolute;left:491px;top:413px;width:1px;height:29px;box-sizing:border-box;background:#c8c8c8"></div>
<svg style="position:absolute;left:463px;top:417px" width="22" height="22" viewBox="0 0 22 22"><g fill="#bdbdbd"><rect x="4.2" y="1.9" width="1.4" height="13"/><rect x="7.5" y="1.9" width="1.7" height="13"/><rect x="13.7" y="1.9" width="1.7" height="13"/><rect x="17.1" y="1.9" width="1.6" height="13"/></g><g fill="#444"><rect x="3.1" y="1.9" width="1.1" height="13.1"/><rect x="5.6" y="1.9" width="1.9" height="10.5"/><rect x="9.2" y="1.9" width="1" height="6"/><rect x="11.7" y="1.9" width="2" height="6"/><rect x="15.4" y="1.9" width="1.7" height="9"/><rect x="18.7" y="1.9" width="1.1" height="13.1"/></g><circle cx="12.1" cy="13.5" r="3.6" fill="#d9e6fb" stroke="#c49a7a" stroke-width="1.1"/><path d="M14.6 16 L17.9 19.3" stroke="#b98a66" stroke-width="2.1" stroke-linecap="round"/></svg>
<svg style="position:absolute;left:498px;top:416px" width="22" height="22" viewBox="0 0 22 22"><rect x="2.2" y="2" width="10.4" height="17.7" rx="1.6" fill="#7a7a7a"/><rect x="3.3" y="3.1" width="8.2" height="6.8" fill="#86c6f0"/><path d="M5.5 5 L9 6.5 L5.5 8Z" fill="#d8eefc"/><rect x="5.2" y="10.8" width="4.5" height="2.2" fill="#f0d10f"/><g fill="#c9c9c9"><rect x="4.2" y="13.8" width="1.5" height="1.3"/><rect x="6.7" y="13.8" width="1.5" height="1.3"/><rect x="9.2" y="13.8" width="1.5" height="1.3"/><rect x="4.2" y="16.3" width="1.5" height="1.3"/><rect x="6.7" y="16.3" width="1.5" height="1.3"/><rect x="9.2" y="16.3" width="1.5" height="1.3"/></g><path d="M13.6 12 L18.6 17" stroke="#555" stroke-width="2.2"/><path d="M20.7 13.3 V19.5 H14.5Z" fill="#555"/></svg>
<div style="position:absolute;left:550px;top:412px;width:112px;height:31px;box-sizing:border-box;border:1px solid #b9b9b9;border-radius:2px;background:linear-gradient(#ffffff,#f4f4f4 60%,#ececec);box-shadow:0 1px 1px rgba(0,0,0,.22);"></div>
<div class="t" style="left:565.5px;top:418px;font-size:16px;color:#333;font-weight:400;">Подобрать</div>
<div style="position:absolute;left:685px;top:412px;width:70px;height:31px;box-sizing:border-box;border:1px solid #b9b9b9;border-radius:2px;background:linear-gradient(#ffffff,#f4f4f4 60%,#ececec);box-shadow:0 1px 1px rgba(0,0,0,.22);"></div>
<div style="position:absolute;left:720px;top:413px;width:1px;height:29px;box-sizing:border-box;background:#c8c8c8"></div>
<svg style="position:absolute;left:692px;top:416px" width="22" height="22" viewBox="0 0 22 22"><path d="M2 2.1 H9.7 L12.7 5.1 V13.5 H2Z" fill="#f2f4f7" stroke="#6f8096" stroke-width="1.1"/><path d="M9.7 2.1 V5.1 H12.7Z" fill="#b9c5d3"/><g fill="#a7b3c1"><rect x="3.4" y="6" width="3" height="0.9"/><rect x="3.4" y="8.5" width="5.5" height="0.9"/><rect x="3.4" y="11" width="5.5" height="0.9"/></g><path d="M9.1 7.8 H16.8 L19.8 10.8 V19.6 H9.1Z" fill="#f2f4f7" stroke="#6f8096" stroke-width="1.1"/><path d="M16.8 7.8 V10.8 H19.8Z" fill="#b9c5d3"/><g fill="#8e9cad"><rect x="10.6" y="11.5" width="3" height="0.9"/><rect x="10.6" y="14" width="7.5" height="0.9"/><rect x="10.6" y="16.5" width="7.5" height="0.9"/></g></svg>
<div style="position:absolute;left:720px;top:412px;width:35px;height:31px;box-sizing:border-box;border:1px solid #b9b9b9;border-radius:2px;background:linear-gradient(#ffffff,#f4f4f4 60%,#ececec);box-shadow:0 1px 1px rgba(0,0,0,.22);box-shadow:none;border-color:#d0d0d0;background:#fafafa"></div>
<div style="position:absolute;left:720px;top:412px;width:1px;height:31px;box-sizing:border-box;background:#9a9a9a"></div>
<svg style="position:absolute;left:727px;top:416px" width="22" height="22" viewBox="0 0 22 22"><rect x="2.3" y="3" width="13.2" height="15.2" fill="#fff" stroke="#e9bfa2" stroke-width="1.2"/><rect x="5.3" y="1.4" width="7.2" height="3.2" rx="1.6" fill="#d3d3d3"/><path d="M8.1 8.2 H15.3 L18.8 11.7 V19.6 H8.1Z" fill="#f5f7fa" stroke="#bcc6d1" stroke-width="1.1"/><g fill="#c3ccd6"><rect x="9.6" y="12" width="3" height="0.9"/><rect x="9.6" y="14.5" width="7.5" height="0.9"/><rect x="9.6" y="17" width="7.5" height="0.9"/></g></svg>
<div style="position:absolute;left:779px;top:412px;width:35px;height:31px;box-sizing:border-box;border:1px solid #b9b9b9;border-radius:2px;background:linear-gradient(#ffffff,#f4f4f4 60%,#ececec);box-shadow:0 1px 1px rgba(0,0,0,.22);"></div>
<svg style="position:absolute;left:786px;top:418px" width="21" height="19" viewBox="0 0 21 19"><rect x="1.3" y="1.3" width="17.6" height="15.2" fill="#fff" stroke="#8a8a8a" stroke-width="1.2"/><rect x="1.3" y="1.3" width="17.6" height="4.3" fill="#5db35d"/><rect x="2.6" y="2.5" width="15" height="1.6" fill="#9fd99f"/><g fill="#9c9c9c"><rect x="1.3" y="8.6" width="17.6" height="1"/><rect x="1.3" y="12.3" width="17.6" height="1"/></g><path d="M6.2 7.4 H16.4 L11.3 12Z" fill="#6cc06c"/><rect x="10.8" y="5.6" width="1" height="2" fill="#6cc06c"/></svg>
<div style="position:absolute;left:838px;top:412px;width:65px;height:31px;box-sizing:border-box;border:1px solid #b9b9b9;border-radius:2px;background:linear-gradient(#ffffff,#f4f4f4 60%,#ececec);box-shadow:0 1px 1px rgba(0,0,0,.22);"></div>
<div class="t" style="left:853.5px;top:418px;font-size:16px;color:#333;font-weight:400;">ГТД</div>
<svg style="position:absolute;left:888px;top:427px" width="8" height="5" viewBox="0 0 8 5"><path d="M1 1 H7 L4 4Z" fill="#444"/></svg>
<div style="position:absolute;left:914px;top:412px;width:102px;height:31px;box-sizing:border-box;border:1px solid #b9b9b9;border-radius:2px;background:linear-gradient(#ffffff,#f4f4f4 60%,#ececec);box-shadow:0 1px 1px rgba(0,0,0,.22);"></div>
<div class="t" style="left:929.5px;top:418px;font-size:16px;color:#333;font-weight:400;">Изменить</div>
<div style="position:absolute;left:1726px;top:412px;width:69px;height:31px;box-sizing:border-box;border:1px solid #b9b9b9;border-radius:2px;background:linear-gradient(#ffffff,#f4f4f4 60%,#ececec);box-shadow:0 1px 1px rgba(0,0,0,.22);"></div>
<div class="t" style="left:1741.5px;top:418px;font-size:16px;color:#333;font-weight:400;">Еще</div>
<svg style="position:absolute;left:1779px;top:427px" width="8" height="5" viewBox="0 0 8 5"><path d="M1 1 H7 L4 4Z" fill="#444"/></svg>
<div style="position:absolute;left:332px;top:455px;width:1463px;height:402px;box-sizing:border-box;border:1px solid #a9a9a9;background:#fff"></div>
<div style="position:absolute;left:335px;top:456px;width:1459px;height:57px;box-sizing:border-box;background:#f2f2f2"></div>
<div style="position:absolute;left:334px;top:514px;width:1460px;height:1px;box-sizing:border-box;background:#c8c8c8"></div>
<div style="position:absolute;left:389px;top:456px;width:1px;height:58px;box-sizing:border-box;background:#d6d6d6"></div>
<div style="position:absolute;left:649px;top:456px;width:1px;height:58px;box-sizing:border-box;background:#d6d6d6"></div>
<div style="position:absolute;left:787px;top:456px;width:1px;height:58px;box-sizing:border-box;background:#d6d6d6"></div>
<div style="position:absolute;left:816px;top:456px;width:1px;height:58px;box-sizing:border-box;background:#d6d6d6"></div>
<div style="position:absolute;left:842px;top:456px;width:1px;height:58px;box-sizing:border-box;background:#d6d6d6"></div>
<div style="position:absolute;left:983px;top:456px;width:1px;height:58px;box-sizing:border-box;background:#d6d6d6"></div>
<div style="position:absolute;left:1075px;top:456px;width:1px;height:58px;box-sizing:border-box;background:#d6d6d6"></div>
<div style="position:absolute;left:1216px;top:456px;width:1px;height:58px;box-sizing:border-box;background:#d6d6d6"></div>
<div style="position:absolute;left:1356px;top:456px;width:1px;height:58px;box-sizing:border-box;background:#d6d6d6"></div>
<div style="position:absolute;left:1472px;top:456px;width:1px;height:58px;box-sizing:border-box;background:#d6d6d6"></div>
<div style="position:absolute;left:1613px;top:456px;width:1px;height:58px;box-sizing:border-box;background:#d6d6d6"></div>
<div style="position:absolute;left:1753px;top:456px;width:1px;height:58px;box-sizing:border-box;background:#d6d6d6"></div>
<div style="position:absolute;left:843px;top:456px;width:1px;height:58px;box-sizing:border-box;background:#d6d6d6"></div>
<div style="position:absolute;left:334px;top:516px;width:1460px;height:32px;box-sizing:border-box;background:#fdf0c5"></div>
<div style="position:absolute;left:334px;top:516px;width:55px;height:32px;box-sizing:border-box;background:#fbe49b"></div>
<div style="position:absolute;left:389px;top:516px;width:1px;height:32px;box-sizing:border-box;background:#ffffff"></div>
<div style="position:absolute;left:649px;top:516px;width:1px;height:32px;box-sizing:border-box;background:#ffffff"></div>
<div style="position:absolute;left:787px;top:516px;width:1px;height:32px;box-sizing:border-box;background:#ffffff"></div>
<div style="position:absolute;left:816px;top:516px;width:1px;height:32px;box-sizing:border-box;background:#ffffff"></div>
<div style="position:absolute;left:842px;top:516px;width:1px;height:32px;box-sizing:border-box;background:#ffffff"></div>
<div style="position:absolute;left:983px;top:516px;width:1px;height:32px;box-sizing:border-box;background:#ffffff"></div>
<div style="position:absolute;left:1075px;top:516px;width:1px;height:32px;box-sizing:border-box;background:#ffffff"></div>
<div style="position:absolute;left:1216px;top:516px;width:1px;height:32px;box-sizing:border-box;background:#ffffff"></div>
<div style="position:absolute;left:1356px;top:516px;width:1px;height:32px;box-sizing:border-box;background:#ffffff"></div>
<div style="position:absolute;left:1472px;top:516px;width:1px;height:32px;box-sizing:border-box;background:#ffffff"></div>
<div style="position:absolute;left:1613px;top:516px;width:1px;height:32px;box-sizing:border-box;background:#ffffff"></div>
<div style="position:absolute;left:1753px;top:516px;width:1px;height:32px;box-sizing:border-box;background:#ffffff"></div>
<div style="position:absolute;left:334px;top:550px;width:1460px;height:1px;box-sizing:border-box;background:#e2e2e2"></div>
<div style="position:absolute;left:334px;top:583px;width:1460px;height:1px;box-sizing:border-box;background:#e2e2e2"></div>
<div style="position:absolute;left:649px;top:551px;width:1px;height:32px;box-sizing:border-box;background:#e2e2e2"></div>
<div class="t" style="left:343.5px;top:465px;font-size:16px;color:#333;font-weight:400;">N</div>
<div class="t" style="left:399.5px;top:465px;font-size:16px;color:#333;font-weight:400;">Номенклатура</div>
<div class="t" style="left:659.5px;top:465px;font-size:16px;color:#333;font-weight:400;">Характеристи…</div>
<div class="t" style="left:797.5px;top:465px;font-size:16px;color:#333;font-weight:400;">П</div>
<div class="t" style="left:1085.5px;top:465px;font-size:16px;color:#333;font-weight:400;">Цена</div>
<div class="t" style="left:852.5px;top:465px;font-size:16px;color:#333;font-weight:400;">Количество</div>
<div class="t" style="left:992.5px;top:465px;font-size:16px;color:#333;font-weight:400;">Ед.</div>
<div class="t" style="left:1226.5px;top:465px;font-size:16px;color:#333;font-weight:400;">Сумма</div>
<div class="t" style="left:1366.5px;top:465px;font-size:16px;color:#333;font-weight:400;">% НДС</div>
<div class="t" style="left:1483.5px;top:465px;font-size:16px;color:#333;font-weight:400;">Сумма НДС</div>
<div class="t" style="left:1623.5px;top:465px;font-size:16px;color:#333;font-weight:400;">Всего</div>
<div style="position:absolute;left:826px;top:465px;width:6px;height:20px;overflow:hidden"><div class="t" style="left:0;top:0">С</div></div>
<div style="position:absolute;left:1764px;top:465px;width:30px;height:20px;overflow:hidden"><div class="t" style="left:0;top:0">Заказ</div></div>
<div class="t" style="right:1435px;top:523px;font-size:16px;color:#333;">1</div>
<div class="t" style="left:399.5px;top:523px;font-size:16px;color:#333;font-weight:400;">Рубашка REGULAR FIT</div>
<div class="t" style="left:659.5px;top:523px;font-size:16px;color:#333;font-weight:400;">Белый, 46</div>
<div class="t" style="left:797.5px;top:523px;font-size:16px;color:#777;font-weight:400;">&lt;</div>
<div class="t" style="right:841px;top:523px;font-size:16px;color:#333;">1,000</div>
<div class="t" style="left:993.5px;top:523px;font-size:16px;color:#333;font-weight:400;">шт</div>
<div class="t" style="right:608px;top:523px;font-size:16px;color:#333;">100,00</div>
<div class="t" style="right:468px;top:523px;font-size:16px;color:#333;">100,00</div>
<div class="t" style="left:1367.5px;top:523px;font-size:16px;color:#333;font-weight:400;">12%</div>
<div class="t" style="right:211px;top:523px;font-size:16px;color:#333;">10,71</div>
<div class="t" style="right:71px;top:523px;font-size:16px;color:#333;">100,00</div>
<div class="t" style="right:1435px;top:557px;font-size:16px;color:#333;">2</div>
<div class="t" style="left:399.5px;top:557px;font-size:16px;color:#333;font-weight:400;">Рубашка REGULAR FIT</div>
<div class="t" style="left:659.5px;top:557px;font-size:16px;color:#333;font-weight:400;">Черный, 48</div>
<div class="t" style="left:797.5px;top:557px;font-size:16px;color:#777;font-weight:400;">&lt;</div>
<div class="t" style="right:841px;top:557px;font-size:16px;color:#333;">1,000</div>
<div class="t" style="left:993.5px;top:557px;font-size:16px;color:#333;font-weight:400;">шт</div>
<div class="t" style="right:608px;top:557px;font-size:16px;color:#333;">150,00</div>
<div class="t" style="right:468px;top:557px;font-size:16px;color:#333;">150,00</div>
<div class="t" style="left:1367.5px;top:557px;font-size:16px;color:#333;font-weight:400;">12%</div>
<div class="t" style="right:211px;top:557px;font-size:16px;color:#333;">16,07</div>
<div class="t" style="right:71px;top:557px;font-size:16px;color:#333;">150,00</div>
<div style="position:absolute;left:651px;top:617px;width:674px;height:38px;box-sizing:border-box;border:1px solid #444;background:#fff"></div>
<div class="t" style="left:662px;top:623px;font-size:17.9px;line-height:28px;color:#333">Список номенклатуры, поступление которой отражается данным документом</div>
<svg style="position:absolute;left:342px;top:838px" width="8" height="10" viewBox="0 0 8 10"><path d="M6 1.5 V8.5 L1.5 5Z" fill="#c0c0c0"/></svg>
<div style="position:absolute;left:358px;top:838px;width:1412px;height:10px;box-sizing:border-box;background:#cfcfcf;border-radius:5px"></div>
<div style="position:absolute;left:358px;top:838px;width:673px;height:10px;box-sizing:border-box;background:#9f9f9f;border-radius:5px"></div>
<svg style="position:absolute;left:1776px;top:838px" width="8" height="10" viewBox="0 0 8 10"><path d="M2 1.5 V8.5 L6.5 5Z" fill="#444"/></svg>
<div style="position:absolute;left:319px;top:878px;width:576px;height:28px;box-sizing:border-box;border:1px solid #a9a9a9;border-radius:3px;background:#fff;"></div>
<div style="position:absolute;left:870px;top:879px;width:1px;height:26px;box-sizing:border-box;background:#a9a9a9"></div>
<div class="t" style="left:325.5px;top:883px;font-size:16px;color:#b4b4b4;font-weight:400;">Комментарий</div>
<svg style="position:absolute;left:875px;top:893px" width="14" height="7" viewBox="0 0 14 7"><g fill="#6a6a6a"><circle cx="3.1" cy="3.6" r="0.9"/><circle cx="6.7" cy="3.6" r="0.9"/><circle cx="10.2" cy="3.6" r="0.9"/></g></svg>
<div class="t" style="left:320.5px;top:927px;font-size:16px;color:#333;font-weight:400;">Счет-фактура (полученный):</div>
<div class="t" style="left:537.5px;top:927px;font-size:16px;color:#1f4fb4;font-weight:400;text-decoration:underline;">создать</div>
<div class="t" style="left:609.5px;top:927px;font-size:16px;color:#333;font-weight:400;">Основание:</div>
<div class="t" style="left:700.5px;top:927px;font-size:16px;color:#1f4fb4;font-weight:400;text-decoration:underline;">выбрать</div>
<div class="t" style="left:1273.5px;top:888px;font-size:16px;color:#4d4d4d;font-weight:400;">Скидка руч., %:</div>
<div class="t" style="left:1273.5px;top:927px;font-size:16px;color:#4d4d4d;font-weight:400;">Скидка руч., Σ:</div>
<div style="position:absolute;left:1399px;top:884px;width:159px;height:28px;box-sizing:border-box;border:1px solid #a9a9a9;border-radius:3px;background:#fff;"></div>
<div style="position:absolute;left:1532px;top:885px;width:1px;height:26px;box-sizing:border-box;background:#a9a9a9"></div>
<div class="t" style="right:289px;top:888px;font-size:16px;color:#333;">0,00</div>
<svg style="position:absolute;left:1538px;top:890px" width="13" height="15" viewBox="0 0 13 15"><rect x="1.7" y="1.7" width="9.4" height="11.6" rx="1" fill="#fff" stroke="#666" stroke-width="1.4"/><rect x="1.7" y="1.7" width="9.4" height="2.8" fill="#666"/><g fill="#9a9a9a"><rect x="3.3" y="6" width="1.3" height="1.2"/><rect x="5.6" y="6" width="1.3" height="1.2"/><rect x="7.9" y="6" width="1.3" height="4.8"/><rect x="3.3" y="8.2" width="1.3" height="1.2"/><rect x="5.6" y="8.2" width="1.3" height="1.2"/><rect x="3.3" y="10.4" width="3.6" height="1.2"/></g></svg>
<div style="position:absolute;left:1399px;top:923px;width:159px;height:27px;box-sizing:border-box;border:1px solid #a9a9a9;border-radius:3px;background:#fff;"></div>
<div style="position:absolute;left:1532px;top:924px;width:1px;height:25px;box-sizing:border-box;background:#a9a9a9"></div>
<div class="t" style="right:289px;top:927px;font-size:16px;color:#333;">0,00</div>
<svg style="position:absolute;left:1538px;top:929px" width="13" height="15" viewBox="0 0 13 15"><rect x="1.7" y="1.7" width="9.4" height="11.6" rx="1" fill="#fff" stroke="#666" stroke-width="1.4"/><rect x="1.7" y="1.7" width="9.4" height="2.8" fill="#666"/><g fill="#9a9a9a"><rect x="3.3" y="6" width="1.3" height="1.2"/><rect x="5.6" y="6" width="1.3" height="1.2"/><rect x="7.9" y="6" width="1.3" height="4.8"/><rect x="3.3" y="8.2" width="1.3" height="1.2"/><rect x="5.6" y="8.2" width="1.3" height="1.2"/><rect x="3.3" y="10.4" width="3.6" height="1.2"/></g></svg>
<div style="position:absolute;left:1582px;top:878px;width:226px;height:78px;box-sizing:border-box;background:#dcdcdc"></div>
<div class="t" style="left:1588.5px;top:888px;font-size:16px;color:#4d4d4d;font-weight:400;">НДС:</div>
<div class="t" style="left:1588.5px;top:927px;font-size:16px;color:#4d4d4d;font-weight:400;">Всего:</div>
<div style="position:absolute;left:1645px;top:884px;width:157px;height:28px;box-sizing:border-box;border:1px solid #c8c8c8;border-radius:3px;background:#dcdcdc"></div>
<div style="position:absolute;left:1645px;top:923px;width:157px;height:27px;box-sizing:border-box;border:1px solid #c8c8c8;border-radius:3px;background:#dcdcdc"></div>
<div class="t" style="right:19px;top:888px;font-size:16px;color:#333;">26,78</div>
<div class="t" style="right:19px;top:927px;font-size:16px;color:#333;">250,00</div>
</body></html>
